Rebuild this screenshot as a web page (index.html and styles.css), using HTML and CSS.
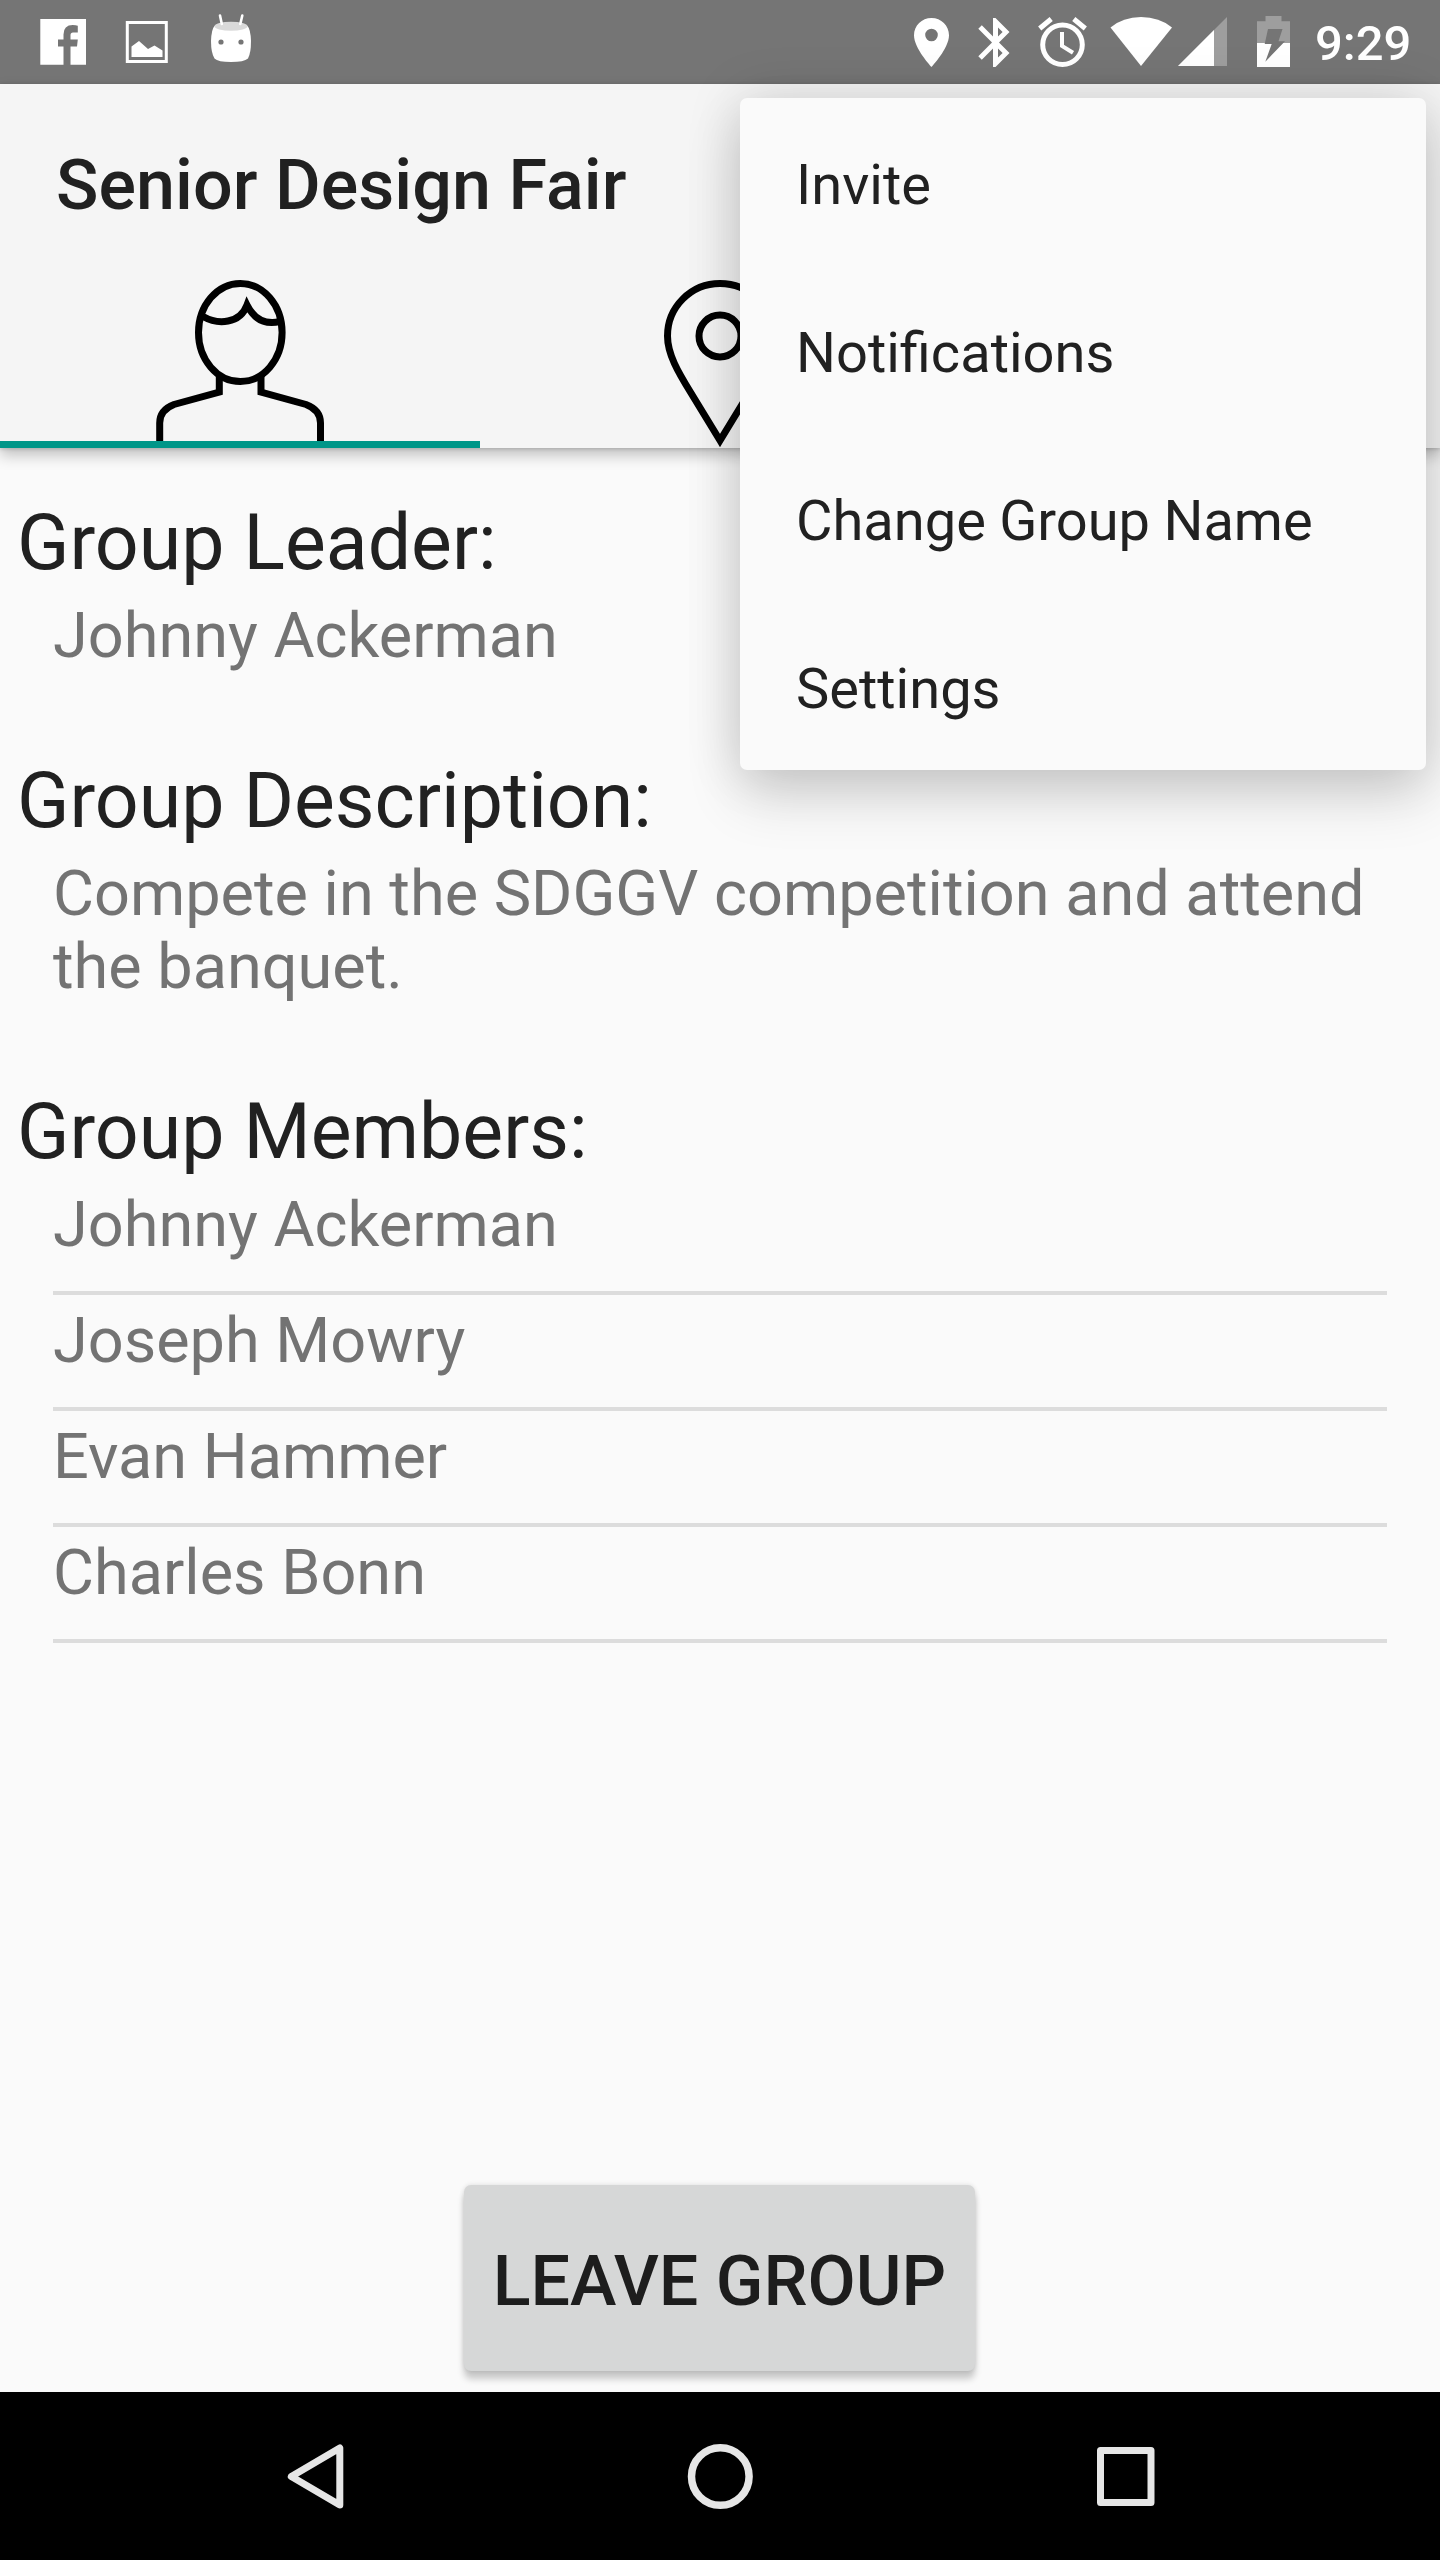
FILE: index.html
```html
<!DOCTYPE html>
<html lang="en">
<head>
<meta charset="utf-8">
<title>Senior Design Fair</title>
<link rel="stylesheet" href="styles.css">
</head>
<body>
<div class="screen">
  <header class="status">
    <svg class="status-icons" width="300" height="84" viewBox="0 0 300 84">
      <path fill="#fff" d="M40.3 19H86v45.700H70.500V46.500h6.500l.8-7h-7.300v-4.500q0-2.500 2.500-2.500h4.800v-6.800q-2-.7-5-.7q-9.300 0-9.300 9.500v5H58v7h5.500v18.200H40.300z"/>
      <path fill="none" stroke="#fff" stroke-width="3" d="M127.300 22.500h39v39h-39z"/>
      <path fill="#fff" d="M131.500 46.500l7.500-5.500 9 8 6.500-3.500 8 5v6.500h-31z"/>
      <path fill="#fff" d="M214.500 26Q231 19 247.500 26Q250.500 29 251 41Q251 53 248 58.500Q244 62 231 62Q218 62 214.500 58.500Q211 53 211 41Q211.500 29 214.500 26Z"/>
      <ellipse cx="231" cy="26.200" rx="16.500" ry="4.500" fill="#dadada"/>
      <path stroke="#fff" stroke-width="2.600" stroke-linecap="round" d="M220 15.500l1.800 8.500M242.300 15.500l-2 8.500"/>
      <circle cx="221" cy="42" r="2.600" fill="#757575"/><circle cx="241" cy="42" r="2.600" fill="#757575"/>
    </svg>
    <svg class="status-icons" width="400" height="84" viewBox="900 0 400 84">
      <path fill="#fff" fill-rule="evenodd" d="M931.500 18C921.800 18 914 25.700 914 35.300C914 48.500 931.500 67 931.500 67S949 48.500 949 35.300C949 25.700 941.200 18 931.500 18ZM931.500 41.300a6.300 6.300 0 1 1 0-12.600a6.300 6.300 0 0 1 0 12.600Z"/>
      <path fill="#fff" fill-rule="evenodd" d="M1009.500 32L995.500 18H993V36.500L981.800 25.300 978.300 28.800 992 42.500 978.300 56.200 981.800 59.700 993 48.500V67H995.500L1009.500 53 999 42.500ZM998 27.400L1002.600 32 998 36.500ZM1002.600 53L998 57.600V48.400Z"/>
      <circle cx="1062.500" cy="44.800" r="19.800" fill="none" stroke="#fff" stroke-width="5"/>
      <path fill="none" stroke="#fff" stroke-width="4" d="M1062 32v14l11 6.700"/>
      <path stroke="#fff" stroke-width="5" d="M1039.700 28.500l11.500-9.500M1085.300 28.500l-11.500-9.500"/>
      <path fill="#fff" d="M1110.500 27.500Q1123 17 1141 17Q1159.500 17 1172 27.500L1141 66Z"/>
      <path fill="#9e9e9e" d="M1227 17v49h-49z"/>
      <path fill="#fff" d="M1214 30v36h-36z"/>
      <path fill="#9e9e9e" d="M1265.500 16h16v5.300h8.500v22h-33v-22h8.500z"/>
      <path fill="#fff" d="M1257 43h33v24h-33z"/>
      <path fill="#757575" d="M1268 29h14.500l-4 12.200h6.500L1265.300 61.700l6.400-17.700h-7z"/>
    </svg>
    <span class="clock">9:29</span>
  </header>

  <div class="appbar">
    <h1 class="title">Senior Design Fair</h1>
    <nav class="tabs">
      <a class="tab tab-active">
        <svg width="168" height="161" viewBox="156 280 168 161" fill="none" stroke="#000" stroke-width="7">
          <ellipse cx="240.300" cy="332.500" rx="41.800" ry="49"/>
          <path d="M203 316.500C218 325 240 324 247 305C254 319 265 325 280 321.500"/>
          <path d="M219.300 375v17L174 404.500Q159.700 410 159.700 423V448M261 375v17L306 404.500Q320.500 410 320.500 423V448"/>
        </svg>
      </a>
      <a class="tab">
        <svg width="168" height="168" viewBox="636 280 168 168" fill="none" stroke="#000" stroke-width="7">
          <path d="M720 440.500L691 393C678 372 667.500 354 667.500 336A52.500 52.500 0 0 1 772.500 336C772.500 354 762 372 749 393Z"/>
          <circle cx="720" cy="336" r="21"/>
        </svg>
      </a>
      <a class="tab"></a>
    </nav>
  </div>

  <main class="content">
    <section class="section">
      <h2 class="heading">Group Leader:</h2>
      <p class="text">Johnny Ackerman</p>
    </section>
    <section class="section">
      <h2 class="heading">Group Description:</h2>
      <p class="text">Compete in the SDGGV competition and attend the banquet.</p>
    </section>
    <section class="section">
      <h2 class="heading">Group Members:</h2>
      <ul class="members">
        <li class="member">Johnny Ackerman</li>
        <li class="member">Joseph Mowry</li>
        <li class="member">Evan Hammer</li>
        <li class="member">Charles Bonn</li>
      </ul>
    </section>
    <button class="leave">LEAVE GROUP</button>
  </main>

  <footer class="navbar">
    <svg width="1440" height="168" viewBox="0 2392 1440 168" fill="none" stroke="#e6e6e6" stroke-width="7" stroke-linejoin="round">
      <path d="M291.300 2476.500L339.800 2448V2505Z"/>
      <circle cx="720.300" cy="2476.500" r="28.800" stroke-width="7.500"/>
      <rect x="1100.500" y="2450.500" width="50.500" height="52"/>
    </svg>
  </footer>

  <div class="menu">
    <a class="menu-item">Invite</a>
    <a class="menu-item">Notifications</a>
    <a class="menu-item">Change Group Name</a>
    <a class="menu-item">Settings</a>
  </div>
</div>
</body>
</html>
```

FILE: styles.css
```css
* { box-sizing: border-box; margin: 0; padding: 0; }
body { font-family: Roboto, sans-serif; color: #212121; background: #fafafa; }
.screen {
  position: relative;
  display: flex;
  flex-direction: column;
  width: 1440px;
  height: 2560px;
  overflow: hidden;
  background: #fafafa;
}
.status {
  display: flex;
  justify-content: space-between;
  flex: none;
  height: 84px;
  background: #757575;
}
.status-icons { display: block; flex: none; }
.status-icons:nth-child(2) { margin-left: auto; }
.clock {
  width: 140px;
  padding-left: 15px;
  color: #fff;
  font-size: 49px;
  font-weight: 500;
  line-height: 87px;
}
.appbar {
  flex: none;
  height: 364px;
  background: #f5f5f5;
  box-shadow: 0 7px 14px rgba(0, 0, 0, .24), 0 1px 4px rgba(0, 0, 0, .16);
}
.title {
  height: 196px;
  padding: 6px 56px 0;
  font-size: 70px;
  font-weight: 500;
  line-height: 190px;
  letter-spacing: .06px;
}
.tabs { display: flex; height: 168px; }
.tab { display: flex; justify-content: center; align-items: flex-start; width: 480px; }
.tab svg { display: block; }
.tab-active { border-bottom: 7px solid #009688; }
.content {
  display: flex;
  flex: 1;
  flex-direction: column;
  padding: 50px 53px 21px 17px;
}
.section { margin-bottom: 84px; }
.section:last-of-type { margin-bottom: 0; }
.heading { font-size: 77px; font-weight: 400; line-height: 90px; }
.text { padding: 11px 0 0 36px; color: #737373; font-size: 63px; line-height: 73px; }
.members { margin: 2px 0 0 36px; list-style: none; }
.member {
  height: 116px;
  padding-top: 9px;
  border-bottom: 4px solid #dcdcdc;
  color: #737373;
  font-size: 63px;
  line-height: 73px;
}
.leave {
  align-self: center;
  width: 511px;
  height: 186px;
  margin-top: auto;
  /* centres the button on the screen, since the side paddings differ */
  margin-left: 35px;
  padding-top: 6px;
  border: 0;
  border-radius: 7px;
  background: #d6d7d7;
  box-shadow: 0 8px 7px rgba(0, 0, 0, .2), 0 0 5px rgba(0, 0, 0, .12);
  color: #1d1d1d;
  font: 500 70px/180px Roboto, sans-serif;
}
.navbar { flex: none; height: 168px; background: #000; }
.navbar svg { display: block; }
.menu {
  position: absolute;
  top: 98px;
  left: 740px;
  width: 686px;
  height: 672px;
  border-radius: 7px;
  background: #fafafa;
  box-shadow: 0 0 56px rgba(0, 0, 0, .14), 0 28px 56px rgba(0, 0, 0, .14);
}
.menu-item {
  display: block;
  height: 168px;
  padding: 6px 56px 0;
  font-size: 56px;
  line-height: 162px;
  word-spacing: -.5px;
}
```
